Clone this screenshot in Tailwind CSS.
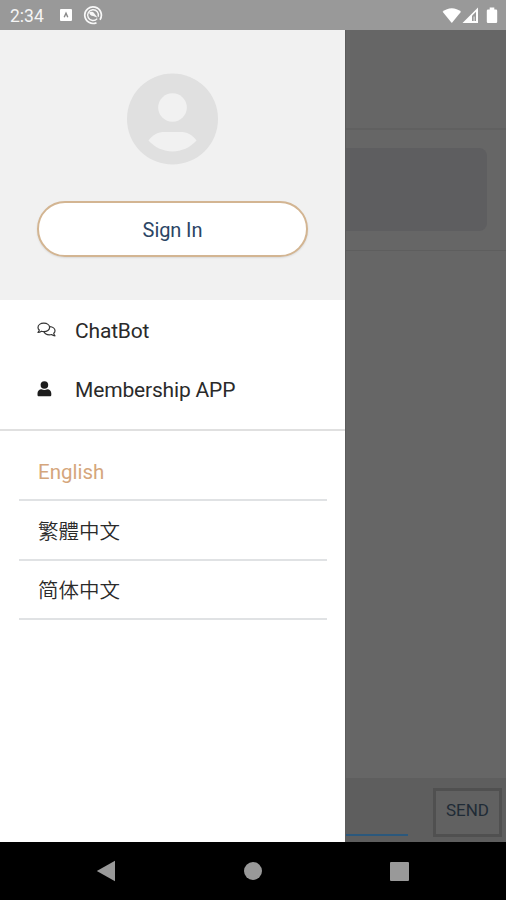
<!DOCTYPE html>
<html lang="en">
<head>
  <meta charset="UTF-8">
  <meta name="viewport" content="width=device-width, initial-scale=1.0">
  <title>ChatBot</title>
  <script src="https://cdn.jsdelivr.net/npm/@tailwindcss/browser@4"></script>
</head>
<body class="bg-black font-[Roboto,'Noto_Sans_CJK_TC',sans-serif]">
  <div class="w-[506px] h-[900px] flex flex-col overflow-hidden">

    <!-- Status bar -->
    <header class="h-[30px] shrink-0 bg-[#999] flex items-center justify-between pl-[10px] pr-[8px] text-[#f5f5f5]">
      <div class="flex items-center">
        <span class="w-[49px] pt-[3px] text-[17.5px] leading-none">2:34</span>
        <svg class="w-[14px] h-[14px]" viewBox="0 0 14 14" fill="none">
          <rect x="1" y="1" width="12" height="12" rx="1" fill="#fff"/>
          <path d="M5.2 9.3 7 5.2l1.8 4.1" stroke="#888" stroke-width="1.4"/>
        </svg>
        <svg class="w-[20px] h-[20px] ml-[10px]" viewBox="0 0 20 20" fill="none" stroke="#f8f8f8">
          <path d="M13.5 17.7A8.3 8.3 0 1 1 17 14.7" stroke-width="1.7"/>
          <path d="M14.2 13.6A5.4 5.4 0 1 1 15.2 11.8" stroke-width="1.4"/>
          <path d="M6 7.5c2-1.3 4.2-.9 5.2.7l3.4 4.5-4.4-1.6C8 10.8 6.5 9.5 6 7.5z" fill="#f8f8f8" stroke="none"/>
        </svg>
      </div>
      <div class="flex items-center">
        <svg class="w-[20px] h-[17px]" viewBox="0 0 20 17" fill="#fff">
          <path d="M.6 4.8C5.8.1 13.8.1 19 4.8L9.8 16z"/>
        </svg>
        <svg class="w-[17px] h-[17px]" viewBox="0 0 17 17">
          <path d="M.5 16 16 .5V16z" fill="#fff"/>
          <path d="M10 8.8 14 4.7V14h-4z" fill="#999"/>
          <path d="M11.5 9.5h1.2V14h-1.2z" fill="#ddd"/>
        </svg>
        <svg class="w-[12px] h-[17px] ml-[7px]" viewBox="0 0 12 17" fill="#fff">
          <path d="M3.7.5h4.6v2H10q1.2 0 1.2 1.2v11.1q0 1.2-1.2 1.2H2q-1.2 0-1.2-1.2V3.7Q.8 2.5 2 2.5h1.7z"/>
        </svg>
      </div>
    </header>

    <div class="flex h-[812px] shrink-0">
      <!-- Drawer -->
      <aside class="w-[345px] shrink-0 bg-white text-[#2a2a2a]">
        <section class="h-[270px] bg-[#f1f1f1] pt-[43px] flex flex-col items-center">
          <svg class="w-[92px] h-[92px]" viewBox="0 0 92 92">
            <circle cx="45.5" cy="46" r="45.5" fill="#e0e0e0"/>
            <circle cx="45.5" cy="34.5" r="14.3" fill="#f1f1f1"/>
            <path d="M21.5 67.5C25.5 61.5 31.5 59 37.5 59H53.500C59.5 59 65.5 61.5 69.5 67.5 56.5 82 34.5 82 21.500 67.5z" fill="#f1f1f1"/>
          </svg>
          <button class="mt-[36px] pt-[2px] w-[271px] h-[56px] rounded-full border-2 border-[#d3b592] bg-white text-[#2b4565] text-[20px] tracking-[-0.1px] shadow-[0_1px_2px_rgba(0,0,0,0.1)]">Sign In</button>
        </section>

        <nav class="h-[131px] border-b-2 border-[#e0e0e0] text-[21px] tracking-[-0.17px]">
          <a class="h-[60px] flex items-center pl-[37px]">
            <svg class="w-[19px] h-[16px] mr-[19px]" viewBox="0 0 19 16" fill="none" stroke="#333" stroke-width="1.2" stroke-linejoin="round">
              <path d="M6.8 1.2c3.3 0 5.8 1.8 5.8 4.2s-2.5 4.2-5.8 4.2c-.9 0-1.7-.1-2.4-.4-1 .8-2.1 1.3-3.4 1.3.7-.8 1.2-1.5 1.3-2.5C1.5 7.3 1 6.4 1 5.4 1 3 3.5 1.2 6.8 1.2z"/>
              <path d="M12.8 4.7c2.9.1 5.2 1.8 5.2 4 0 1-.5 1.9-1.3 2.6.1 1 .6 1.7 1.3 2.5-1.3 0-2.4-.5-3.4-1.3-.7.2-1.5.3-2.4.3-2.4 0-4.4-1.2-5.2-3.1"/>
            </svg>
            <span class="pt-[3px]">ChatBot</span>
          </a>
          <a class="h-[59px] flex items-center pl-[37px]">
            <svg class="w-[15px] h-[16px] mr-[23px] mb-[2px]" viewBox="0 0 15 16" fill="#1c1c1c">
              <circle cx="7.4" cy="4" r="3.8"/>
              <path d="M4.5 8.3c1.8 1 4 1 5.8 0 2.3.1 4 1.8 4 4.2v1.4c0 .8-.6 1.4-1.4 1.4h-11c-.8 0-1.4-.6-1.4-1.4v-1.4c0-2.4 1.7-4.1 4-4.2z"/>
            </svg>
            <span class="pt-[2px]">Membership APP</span>
          </a>
        </nav>

        <ul class="pt-[11px] pl-[19px] pr-[18px] text-[20.5px]">
          <li class="h-[59px] flex items-center pl-[19px] pt-[3px] border-b-2 border-[#e0e2e4] text-[#d5a67c]">English</li>
          <li class="h-[60px] flex items-center pl-[19px] border-b-2 border-[#e0e2e4] font-['Noto_Sans_CJK_TC',sans-serif] font-[350]">繁體中文</li>
          <li class="h-[59px] flex items-center pl-[19px] border-b-2 border-[#e0e2e4] font-['Noto_Sans_CJK_SC',sans-serif] font-[350]" lang="zh-CN">简体中文</li>
        </ul>
      </aside>

      <!-- Dimmed chat page -->
      <main class="flex-1 bg-[#666] flex flex-col border-l border-[#5c5c5c]">
        <div class="h-[100px] border-b-2 border-[#606060]"></div>
        <div class="h-[121px] pt-[18px] pr-[19px] border-b border-[#5e5e5e]">
          <div class="h-[83px] bg-[#5e5e60] rounded-r-lg"></div>
        </div>
        <div class="flex-1"></div>
        <footer class="h-[64px] bg-[#5e5e5e] flex justify-between pr-[4px]">
          <div class="w-[62px] h-[58px] border-b-2 border-[#2b587c]"></div>
          <button class="mt-[10px] w-[69px] h-[49px] border-[3px] border-[#505050] bg-[#616161] text-[#202b36] text-[17px] pb-1">SEND</button>
        </footer>
      </main>
    </div>

    <!-- Navigation bar -->
    <footer class="h-[58px] shrink-0 bg-black flex items-center justify-between pl-[96px] pr-[97px]">
      <svg class="w-[20px] h-[22px]" viewBox="0 0 20 22" fill="#999"><path d="M.8 11 19 .8v20.4z"/></svg>
      <div class="w-[18px] h-[18px] rounded-full bg-[#999]"></div>
      <div class="w-[19px] h-[19px] rounded-[1px] bg-[#999]"></div>
    </footer>
  </div>
</body>
</html>
